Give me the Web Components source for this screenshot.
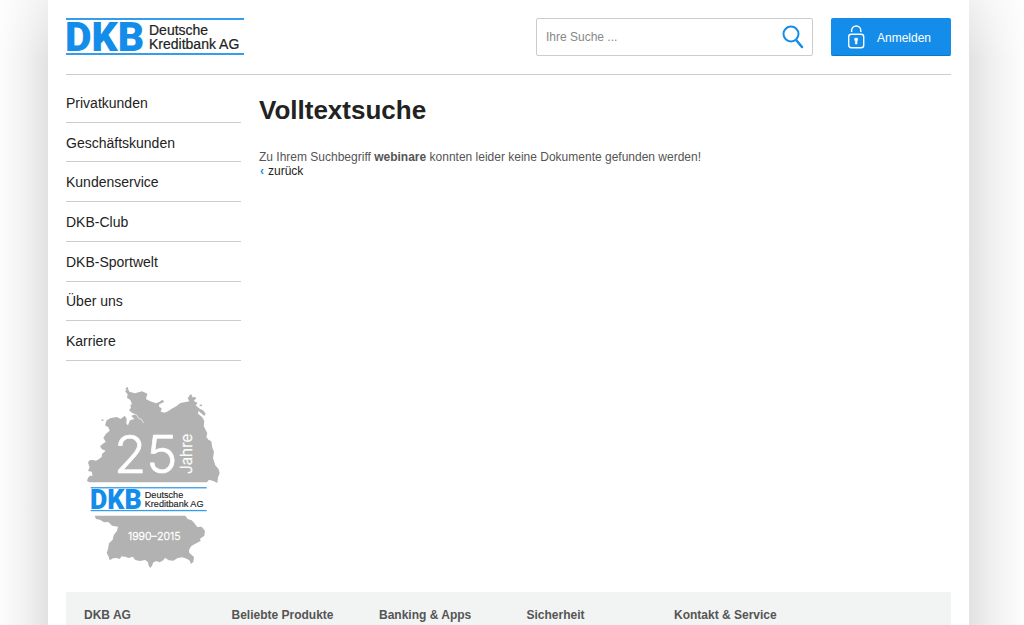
<!DOCTYPE html>
<html lang="de">
<head>
<meta charset="utf-8">
<meta name="viewport" content="width=device-width, initial-scale=1">
<title>Volltextsuche</title>
<style>
    :root {
        --blue: #148dea;
        --line: #ccc;
        --text: #555;
        --dark: #222;
    }

    body {
        margin: 0;
        font: 12px/14px "Liberation Sans", Arial, sans-serif;
        color: var(--text);
        background:
            linear-gradient(rgba(255, 255, 255, .5), rgba(255, 255, 255, 0)) top / 100% 60px no-repeat,
            linear-gradient(to left, #e2e2e2, #f2f2f2 50%, #fdfdfd) left / 48px 100% no-repeat,
            linear-gradient(to right, #e2e2e2, #f2f2f2 50%, #fdfdfd) right / 55px 100% no-repeat,
            #fff;
    }

    h1 {
        margin: 0 0 24px;
        font-size: 26px;
        line-height: 32px;
        color: var(--dark);
    }

    p {
        margin: 0;
    }
</style>
</head>
<body>
<dkb-page>
    <dkb-header slot="header">
        <dkb-logo></dkb-logo>
        <search-box></search-box>
        <login-button>Anmelden</login-button>
    </dkb-header>

    <side-nav slot="side">
        <nav-item>Privatkunden</nav-item>
        <nav-item>Geschäftskunden</nav-item>
        <nav-item>Kundenservice</nav-item>
        <nav-item>DKB-Club</nav-item>
        <nav-item>DKB-Sportwelt</nav-item>
        <nav-item>Über uns</nav-item>
        <nav-item>Karriere</nav-item>
    </side-nav>
    <jubilee-map slot="side"></jubilee-map>

    <h1>Volltextsuche</h1>
    <p>Zu Ihrem Suchbegriff <b>webinare</b> konnten leider keine Dokumente gefunden werden!</p>
    <back-link>zurück</back-link>

    <page-footer slot="footer">
        <footer-column>DKB AG</footer-column>
        <footer-column>Beliebte Produkte</footer-column>
        <footer-column>Banking &amp; Apps</footer-column>
        <footer-column>Sicherheit</footer-column>
        <footer-column wide>Kontakt &amp; Service</footer-column>
    </page-footer>
</dkb-page>

<script>
// Logo drawing, shared by the header and the map
const logoShapes = `
    <rect width="178" height="2" fill="#369cec"/>
    <rect y="35" width="178" height="2" fill="#369cec"/>
    <text x="-1" y="33" font-family="Roboto, sans-serif" font-weight="900" font-size="41" fill="#148dea">DKB</text>
    <g font-family="Liberation Sans, sans-serif" font-size="14" fill="#222" stroke="#222" stroke-width=".2">
        <text x="83" y="17">Deutsche</text>
        <text x="83" y="31">Kreditbank AG</text>
    </g>
`;

// Base class: puts the template of the component into its shadow root
class BaseElement extends HTMLElement {
    constructor() {
        super();
        this.attachShadow({ mode: 'open' });
        this.shadowRoot.innerHTML = this.template();
    }
}

class DkbPage extends BaseElement {
    template() {
        return `
            <style>
                :host {
                    display: flex;
                    flex-direction: column;
                    box-sizing: border-box;
                    min-height: 100vh;
                    margin: 0 55px 0 48px;
                    padding: 0 18px;
                    background: #fff;
                }

                .columns {
                    display: grid;
                    grid-template-columns: 175px 1fr;
                    gap: 18px;
                    margin-bottom: 18px;
                }

                main {
                    padding-top: 19px;
                }

                aside {
                    padding-top: 8px;
                }

                footer {
                    display: flex;
                    flex: 1;
                }
            </style>
            <header><slot name="header"></slot></header>
            <div class="columns">
                <aside><slot name="side"></slot></aside>
                <main><slot></slot></main>
            </div>
            <footer><slot name="footer"></slot></footer>
        `;
    }
}

class DkbHeader extends BaseElement {
    template() {
        return `
            <style>
                :host {
                    display: flex;
                    gap: 18px;
                    padding: 18px 0;
                    border-bottom: 1px solid var(--line);
                }

                ::slotted(dkb-logo) {
                    margin-right: auto;
                }
            </style>
            <slot></slot>
        `;
    }
}

class DkbLogo extends BaseElement {
    template() {
        return `
            <style>
                :host {
                    display: block;
                }

                a, svg {
                    display: block;
                    overflow: visible;
                }
            </style>
            <a href="#"><svg width="178" height="38" viewBox="0 0 178 38">${logoShapes}</svg></a>
        `;
    }
}

class SearchBox extends BaseElement {
    template() {
        return `
            <style>
                :host {
                    display: block;
                    flex: 0 1 277px;
                }

                form {
                    display: flex;
                    box-sizing: border-box;
                    height: 38px;
                    border: 1px solid var(--line);
                    border-radius: 2px;
                }

                input {
                    flex: 1;
                    min-width: 0;
                    padding: 0 9px;
                    border: 0;
                    background: none;
                    font: inherit;
                    color: var(--text);
                }

                input::placeholder {
                    color: #888;
                }

                button {
                    padding: 0 8px;
                    border: 0;
                    background: none;
                    cursor: pointer;
                }

                svg {
                    display: block;
                }
            </style>
            <form>
                <input type="search" placeholder="Ihre Suche ..." aria-label="Ihre Suche">
                <button type="button" aria-label="Suche">
                    <svg width="22" height="26" viewBox="0 0 22 26" fill="none" stroke="#148dea">
                        <circle cx="9" cy="10" r="7.5" stroke-width="2"/>
                        <path d="M14.5 16.5L20 23" stroke-width="2.5" stroke-linecap="round"/>
                    </svg>
                </button>
            </form>
        `;
    }
}

class LoginButton extends BaseElement {
    template() {
        return `
            <style>
                :host {
                    display: block;
                }

                button {
                    display: flex;
                    align-items: center;
                    gap: 12px;
                    box-sizing: border-box;
                    width: 120px;
                    height: 38px;
                    padding: 2px 16px 0;
                    border: 0;
                    border-bottom: 1px solid #0879c4;
                    border-radius: 2px;
                    background: var(--blue);
                    color: #fff;
                    font: inherit;
                    cursor: pointer;
                }

                svg {
                    margin-bottom: 2px;
                }
            </style>
            <button type="button">
                <svg width="18" height="24" viewBox="0 0 18 24" fill="none" stroke="#fff" stroke-width="1.4">
                    <rect x="1.7" y="9.2" width="15" height="13.5" rx="2.5"/>
                    <path d="M4.6 7V5.6A4.6 4.6 0 0 1 13.8 5.6V7"/>
                    <path d="M7.7 13.2H10.6V15.4H10V19H8.4V15.4H7.7Z" fill="#fff" stroke-width=".6"/>
                </svg>
                <slot></slot>
            </button>
        `;
    }
}

class SideNav extends BaseElement {
    template() {
        return `
            <style>
                :host {
                    display: block;
                }

                nav {
                    display: grid;
                    grid-auto-rows: 1fr;
                    height: 278px;
                }
            </style>
            <nav><slot></slot></nav>
        `;
    }
}

class NavItem extends BaseElement {
    template() {
        return `
            <style>
                :host {
                    display: flex;
                    padding-top: 1px;
                    border-bottom: 1px solid var(--line);
                }

                a {
                    flex: 1;
                    align-self: center;
                    font-size: 14px;
                    line-height: 18px;
                    color: var(--dark);
                    text-decoration: none;
                }
            </style>
            <a href="#"><slot></slot></a>
        `;
    }
}

class JubileeMap extends BaseElement {
    template() {
        return `
            <style>
                :host {
                    display: block;
                    margin: 19px 5px 0 10px;
                }

                svg {
                    display: block;
                    overflow: visible;
                }
            </style>
            <svg width="160" height="194" viewBox="0 0 480 582">
                <g fill="#b2b2b2">
                    <path d="M40 307L33 303 36 293 42 287 50 287 47 275 36 273 41 262 36 248 40 241 50 240 60 242 68 238 77 231 78 222 89 212 78 208 72 199 79 193 89 185 82 174 90 161 101 152 97 142 87 136 92 121 104 114 123 111 134 117 146 107 152 116 151 131 156 136 162 121 175 117 166 108 176 102 168 98 159 91 165 83 163 75 168 72 163 60 153 53 155 43 147 34 156 26 160 35 177 40 198 34 214 41 210 57 223 64 240 70 251 65 258 60 265 64 259 69 250 72 249 80 257 85 254 95 266 98 276 94 287 86 302 78 313 69 325 67 340 64 335 54 344 44 350 52 358 52 354 63 365 69 359 76 371 86 381 91 389 101 385 108 372 97 368 92 366 101 379 112 385 124 383 138 394 160 391 171 397 179 406 184 409 203 414 215 411 234 418 256 428 268 431 280 426 292 424 309 412 303 399 299 393 307Z"/>
                    <path d="M148 25L155 21 157 26 151 30ZM75 121L80 118 84 120 79 123ZM339 47L345 43 349 46 343 49ZM349 55L356 51 361 55 355 60ZM370 75L377 73 378 78 372 79Z"/>
                    <path d="M56 407L60 417 72 419 84 427 97 426 108 437 126 440 123 452 113 466 110 479 99 490 96 507 92 519 98 530 101 541 111 535 122 534 131 537 137 529 147 530 159 534 170 530 178 540 192 543 208 540 216 547 218 557 223 564 229 556 231 548 240 543 251 547 262 541 267 533 278 541 292 542 305 534 319 532 334 537 342 543 344 552 352 546 354 531 340 519 339 510 346 498 358 491 374 483 372 476 385 467 387 453 377 440 364 441 354 428 347 421 335 417 328 407Z"/>
                </g>
                <path d="M172 103L181 104 188 115 196 118 203 129" fill="none" stroke="#fff" stroke-width="2"/>
                <g fill="#fff" stroke="#fff" font-family="Inter, sans-serif" font-weight="300">
                    <text x="114" y="280" font-size="158" stroke-width="2">25</text>
                    <text transform="translate(348 282) rotate(-90)" font-size="46" stroke-width="1">Jahre</text>
                    <text x="156" y="480" font-size="32" stroke-width="1">1990–2015</text>
                </g>
                <svg x="44" y="321" width="348" height="73" viewBox="0 0 178 37">${logoShapes}</svg>
            </svg>
        `;
    }
}

class BackLink extends BaseElement {
    template() {
        return `
            <style>
                :host {
                    display: block;
                }

                a {
                    color: var(--dark);
                    text-decoration: none;
                }

                a::before {
                    content: "‹";
                    margin: 0 4px 0 1px;
                    font-weight: bold;
                    color: var(--blue);
                }
            </style>
            <a href="#"><slot></slot></a>
        `;
    }
}

class PageFooter extends BaseElement {
    template() {
        return `
            <style>
                :host {
                    display: grid;
                    flex: 1;
                    grid-template-columns: repeat(6, 1fr);
                    padding-top: 15px;
                    background: #f2f4f3;
                }
            </style>
            <slot></slot>
        `;
    }
}

class FooterColumn extends BaseElement {
    template() {
        return `
            <style>
                :host {
                    display: block;
                    padding-left: 18px;
                }

                :host([wide]) {
                    grid-column: span 2;
                }

                h2 {
                    margin: 0;
                    font-size: 12px;
                    line-height: 16px;
                }
            </style>
            <h2><slot></slot></h2>
        `;
    }
}

// Register the custom elements
customElements.define('dkb-page', DkbPage);
customElements.define('dkb-header', DkbHeader);
customElements.define('dkb-logo', DkbLogo);
customElements.define('search-box', SearchBox);
customElements.define('login-button', LoginButton);
customElements.define('side-nav', SideNav);
customElements.define('nav-item', NavItem);
customElements.define('jubilee-map', JubileeMap);
customElements.define('back-link', BackLink);
customElements.define('page-footer', PageFooter);
customElements.define('footer-column', FooterColumn);
</script>
</body>
</html>
